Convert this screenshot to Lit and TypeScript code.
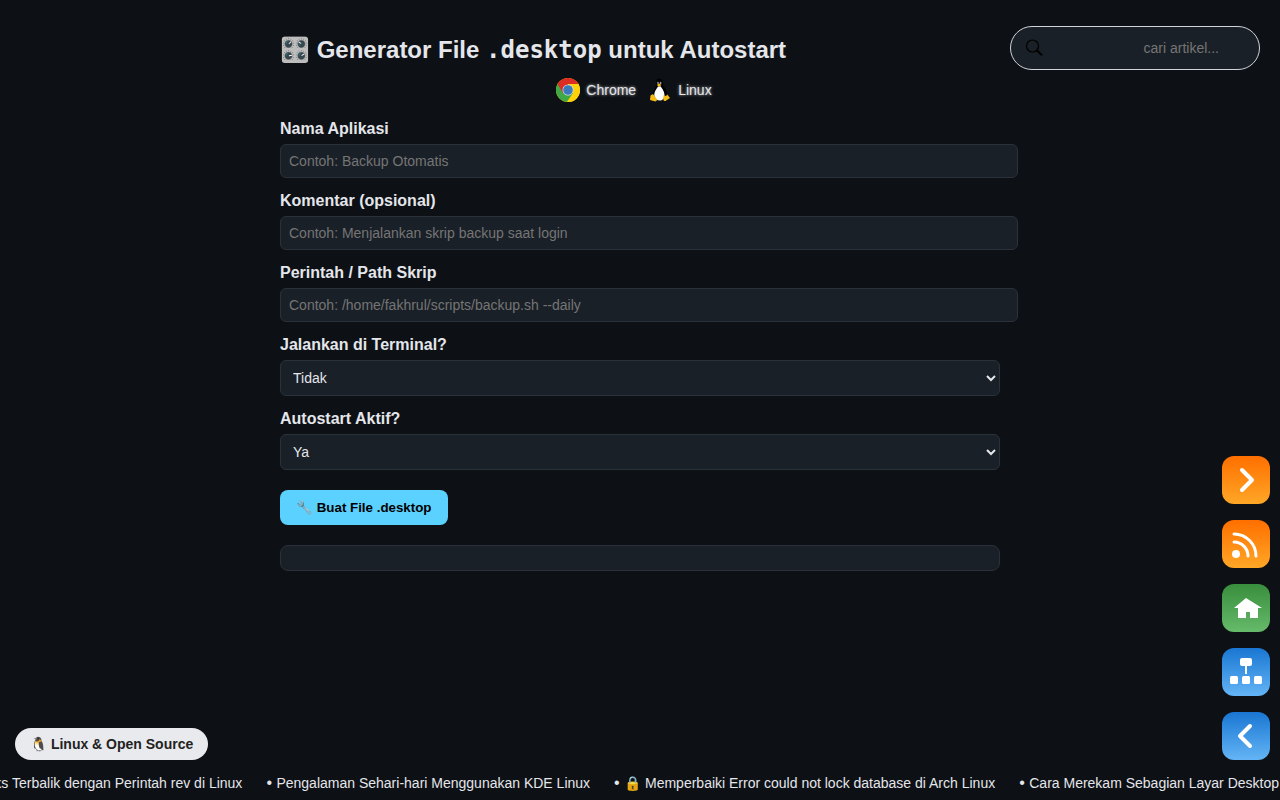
import { LitElement, html, css, svg } from "lit";
import { customElement, state } from "lit/decorators.js";

const NEWS = [
  "Membalik Teks Terbalik dengan Perintah rev di Linux",
  "Pengalaman Sehari-hari Menggunakan KDE Linux",
  "🔒 Memperbaiki Error could not lock database di Arch Linux",
  "Cara Merekam Sebagian Layar Desktop",
];

const FIELDS = [
  { id: "name", label: "Nama Aplikasi", hint: "Contoh: Backup Otomatis" },
  { id: "comment", label: "Komentar (opsional)", hint: "Contoh: Menjalankan skrip backup saat login" },
  { id: "exec", label: "Perintah / Path Skrip", hint: "Contoh: /home/fakhrul/scripts/backup.sh --daily" },
];

const SHORTCUTS = [
  {
    label: "Berikutnya",
    tone: "orange",
    icon: svg`<path d="M20 14 L30 24 L20 34" fill="none" stroke="#fff" stroke-width="4" stroke-linecap="round" stroke-linejoin="round"/>`,
  },
  {
    label: "RSS",
    tone: "orange",
    icon: svg`<circle cx="14" cy="34" r="4" fill="#fff"/><path d="M12 22 A14 14 0 0 1 26 36 M12 14 A22 22 0 0 1 34 36" fill="none" stroke="#fff" stroke-width="3" stroke-linecap="round"/>`,
  },
  {
    label: "Beranda",
    tone: "green",
    icon: svg`<path d="M24 14 L40 24 H36 V34 H28 V28 H24 V34 H16 V24 H12 Z" fill="#fff"/>`,
  },
  {
    label: "Peta situs",
    tone: "blue",
    icon: svg`<g fill="#fff"><rect x="18" y="10" width="12" height="8" rx="2"/><rect x="23" y="17" width="2" height="9"/><rect x="8" y="28" width="8" height="8" rx="1.5"/><rect x="20" y="28" width="8" height="8" rx="1.5"/><rect x="32" y="28" width="8" height="8" rx="1.5"/></g>`,
  },
  {
    label: "Sebelumnya",
    tone: "blue",
    icon: svg`<path d="M28 14 L18 24 L28 34" fill="none" stroke="#fff" stroke-width="4" stroke-linecap="round" stroke-linejoin="round"/>`,
  },
];

@customElement("app-root")
export class AppRoot extends LitElement {
  @state() private output = "";
  @state() private tickerOffset = 94;

  static styles = css`
    :host {
      display: grid;
      grid-template-columns: minmax(0, 1fr) minmax(0, 720px) minmax(0, 1fr);
      grid-template-rows: 1fr auto;
      min-height: 100vh;
      background: #0d1014;
      color: #e4e6eb;
      font-family: "Liberation Sans", Arial, sans-serif;
      font-size: 16px;
    }
    .left {
      display: flex;
      align-items: flex-end;
      padding: 0 0 8px 15px;
    }
    .pill {
      display: flex;
      align-items: center;
      height: 32px;
      padding: 0 15px;
      border-radius: 16px;
      background: #e9eaed;
      color: #222;
      font-size: 14px;
      font-weight: bold;
      text-decoration: none;
      white-space: pre;
    }
    h1 {
      margin: 0;
      padding-top: 36px;
      font-size: 24px;
      line-height: 28px;
      white-space: nowrap;
    }
    code {
      font-family: "DejaVu Sans Mono", monospace;
    }
    .badges {
      display: flex;
      justify-content: center;
      gap: 12px;
      padding: 14px 12px 18px 0;
    }
    .badge {
      display: flex;
      align-items: center;
      gap: 6px;
      font-size: 14px;
      line-height: 24px;
      text-shadow: 0 0 3px #ccc;
    }
    .badge svg {
      width: 24px;
      height: 24px;
    }
    label {
      display: block;
      margin-bottom: 6px;
      font-weight: bold;
      line-height: 18px;
    }
    .field {
      margin-bottom: 14px;
    }
    .field input {
      display: block;
      box-sizing: content-box;
      width: 100%;
      height: 16px;
      padding: 8px;
      border: 1px solid #2b313a;
      border-radius: 6px;
      background: #1a2027;
      color: inherit;
      font: 14px "Liberation Sans", Arial, sans-serif;
    }
    ::placeholder {
      color: #757575;
      opacity: 1;
    }
    select {
      display: block;
      width: 100%;
      height: 36px;
      padding: 8px;
      border: 1px solid #2b313a;
      border-radius: 6px;
      background: #1a2027;
      color: #e4e6eb;
      font: 14px "Liberation Sans", Arial, sans-serif;
    }
    .create {
      display: block;
      height: 35px;
      margin-top: 20px;
      padding: 0 16px;
      border: 0;
      border-radius: 8px;
      background: #5ad1ff;
      color: #000;
      font-family: inherit;
      font-weight: bold;
    }
    .output {
      margin: 20px 0 0;
      padding: 12px;
      border: 1px solid #2b313a;
      border-radius: 8px;
      background: #1a2027;
      font: 14px "DejaVu Sans Mono", monospace;
      white-space: pre-wrap;
    }
    .right {
      display: flex;
      flex-direction: column;
      align-items: flex-end;
      justify-content: space-between;
      gap: 16px;
      padding: 26px 10px 8px 0;
    }
    .search {
      display: flex;
      align-items: center;
      box-sizing: border-box;
      width: 250px;
      height: 44px;
      margin-right: 10px;
      padding: 0 26px 0 14px;
      border: 1px solid #d0d3d8;
      border-radius: 22px;
      background: #1a2027;
    }
    .search svg {
      flex: none;
      width: 18px;
      height: 18px;
    }
    .search input {
      flex: 1;
      min-width: 0;
      padding: 0;
      border: 0;
      outline: 0;
      background: none;
      color: inherit;
      text-align: right;
      font: 14px "Liberation Sans", Arial, sans-serif;
    }
    .dock {
      display: flex;
      flex-direction: column;
      gap: 16px;
    }
    .dock a {
      display: block;
      width: 48px;
      height: 48px;
      border-radius: 12px;
    }
    .dock svg {
      display: block;
    }
    .orange {
      background: linear-gradient(#ff6f00, #ffa726);
    }
    .green {
      background: linear-gradient(#388e3c, #66bb6a);
    }
    .blue {
      background: linear-gradient(#1976d2, #64b5f6);
    }
    .ticker {
      grid-column: 1 / -1;
      overflow: hidden;
      height: 32px;
    }
    .ticker ul {
      display: flex;
      gap: 24px;
      margin: 0;
      padding: 0;
      list-style: none;
      font-size: 16px;
      line-height: 30px;
      white-space: nowrap;
    }
    .ticker a {
      color: inherit;
      font-size: 14px;
      text-decoration: none;
    }
  `;

  private generate() {
    const value = (id: string) =>
      (this.renderRoot.querySelector("#" + id) as HTMLInputElement | HTMLSelectElement).value;
    this.output = [
      "[Desktop Entry]",
      "Type=Application",
      "Name=" + value("name"),
      "Comment=" + value("comment"),
      "Exec=" + value("exec"),
      "Terminal=" + value("terminal"),
      "X-GNOME-Autostart-enabled=" + value("autostart"),
    ].join("\n");
  }

  render() {
    return html`
      <aside class="left"><a class="pill" href="#linux">🐧 Linux &amp; Open Source</a></aside>
      <main>
        <h1>🎛️ Generator File <code>.desktop</code> untuk Autostart</h1>
        <div class="badges">
          <span class="badge">
            <svg viewBox="0 0 24 24" aria-hidden="true">
              <circle cx="12" cy="12" r="12" fill="#fdd20a" />
              <path d="M12 12 L1.6 6 A12 12 0 0 0 11 24 L17.2 15Z" fill="#3fa947" />
              <path d="M12 12 L6.8 15 L1.6 6 A12 12 0 0 1 22.4 6 L12 6Z" fill="#dd2c24" />
              <path d="M12 6 H22.4 A12 12 0 0 1 11 24 L17.2 15Z" fill="#fdd20a" />
              <circle cx="12" cy="12" r="5.5" fill="#d5dde2" />
              <circle cx="12" cy="12" r="4.8" fill="#3979bd" />
            </svg>
            Chrome
          </span>
          <span class="badge">
            <svg viewBox="0 0 24 24" aria-hidden="true">
              <path d="M11 .8C8.6.8 8 2.8 8.3 5.6 8.5 8 7 10 5.8 12.5C4.7 15 4 18 6 20.5L10 22H16L19 19C20 15.5 18.5 12 16.5 9.5 14.5 7 15.3 4.5 14.3 2.5 13.7 1.3 12.6.8 11 .8Z" fill="#000" />
              <path d="M10 8.5C8.7 10.5 6.2 13.5 6.2 17 6.7 20.5 9 22.5 12 22.5S16.5 20 16.5 17C16.5 13.5 14 10.5 12.5 8.3Z" fill="#fff" />
              <ellipse cx="10" cy="5" rx=".8" ry="1.2" fill="#999" />
              <ellipse cx="12.6" cy="5" rx=".9" ry="1.2" fill="#999" />
              <path d="M8.8 6.9 L11.2 5.5 L13.5 6.9 L11 8.8Z" fill="#f4b913" />
              <path d="M5 16 L9 21.5 C9 23 7.8 23.7 6.5 23.3 L2 22 L2.5 17.5Z" fill="#f7bc14" />
              <path d="M15.7 17 C17 18.5 18.5 18 19.3 16.5 L22 20 L17.5 23 C15.5 23.5 14.8 22 15.7 17Z" fill="#f7bc14" />
            </svg>
            Linux
          </span>
        </div>
        ${FIELDS.map(
          (f) => html`<div class="field">
            <label for=${f.id}>${f.label}</label>
            <input id=${f.id} type="text" placeholder=${f.hint} />
          </div>`
        )}
        <div class="field">
          <label for="terminal">Jalankan di Terminal?</label>
          <select id="terminal">
            <option value="false">Tidak</option>
            <option value="true">Ya</option>
          </select>
        </div>
        <div class="field">
          <label for="autostart">Autostart Aktif?</label>
          <select id="autostart">
            <option value="true">Ya</option>
            <option value="false">Tidak</option>
          </select>
        </div>
        <button class="create" type="button" @click=${this.generate}>🔧 Buat File .desktop</button>
        <pre class="output">${this.output}</pre>
      </main>
      <aside class="right">
        <div class="search">
          <svg viewBox="0 0 18 18" fill="none" stroke="#000" aria-hidden="true">
            <circle cx="7.5" cy="7" r="6" stroke-width="1.2" />
            <path d="M11.8 11.3 L17 16.2" stroke-width="2.2" />
          </svg>
          <input type="search" aria-label="Cari artikel" placeholder="cari artikel..." />
        </div>
        <nav class="dock">
          ${SHORTCUTS.map(
            (s) => html`<a class=${s.tone} href="#" aria-label=${s.label}>
              <svg width="48" height="48" viewBox="0 0 48 48">${s.icon}</svg>
            </a>`
          )}
        </nav>
      </aside>
      <footer class="ticker">
        <ul style="transform: translateX(${-this.tickerOffset}px)">
          ${NEWS.map((n) => html`<li>• <a href="#">${n}</a></li>`)}
        </ul>
      </footer>
    `;
  }
}
